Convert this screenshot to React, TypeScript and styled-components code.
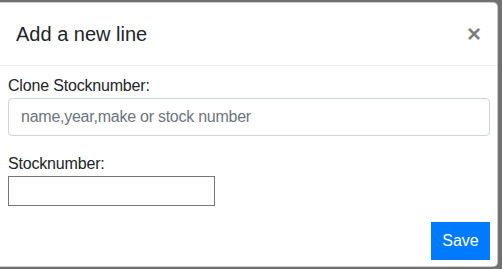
import styled, { createGlobalStyle } from "styled-components";

const GlobalStyle = createGlobalStyle`
  html, body {
    margin: 0;
    padding: 0;
    background: #fff;
  }
  body {
    font-family: "Liberation Sans", Arial, sans-serif;
    color: #212529;
  }
`;

const Backdrop = styled.div`
  position: fixed;
  inset: 0;
  background-color: #717171;
  display: flex;
  align-items: flex-start;
  padding-top: 2px;
`;

const Dialog = styled.div`
  width: 498px;
  height: 265px;
  box-sizing: border-box;
  background: #fff;
  border: 1px solid rgba(0, 0, 0, 0.2);
  border-left: none;
  border-radius: 0 5px 5px 0;
  display: flex;
  flex-direction: column;
`;

const Header = styled.div`
  display: flex;
  justify-content: space-between;
  align-items: center;
  padding: 16px;
  border-bottom: 1px solid #e9ecef;
`;

const Title = styled.h5`
  margin: 0;
  font-size: 20px;
  font-weight: 400;
  line-height: 30px;
  color: #212529;
`;

const CloseButton = styled.button`
  border: none;
  background: none;
  padding: 0;
  font-family: "Liberation Sans", Arial, sans-serif;
  font-size: 24px;
  font-weight: 700;
  line-height: 1;
  color: #000;
  opacity: 0.5;
  cursor: pointer;
`;

const Body = styled.div`
  padding: 8px 7px 6px 8px;
  display: flex;
  flex-direction: column;
  flex: 1;
`;

const Group = styled.div`
  display: flex;
  flex-direction: column;
  align-items: flex-start;
  margin-bottom: 16px;
`;

const Label = styled.label`
  font-size: 16px;
  line-height: 24px;
  letter-spacing: -0.18px;
`;

const TextInput = styled.input`
  box-sizing: border-box;
  width: 100%;
  height: 38px;
  padding: 6px 12px;
  font-family: "Liberation Sans", Arial, sans-serif;
  font-size: 16px;
  letter-spacing: -0.25px;
  color: #495057;
  border: 1px solid #ced4da;
  border-radius: 4px;
  outline: none;

  &::placeholder {
    color: #6c757d;
  }
`;

const PlainInput = styled.input`
  box-sizing: border-box;
  width: 207px;
  height: 30px;
  border: 1px solid #767676;
  border-radius: 0;
  padding: 2px 4px;
  font-size: 16px;
  outline: none;
`;

const Footer = styled.div`
  display: flex;
  justify-content: flex-end;
`;

const SaveButton = styled.button`
  width: 59px;
  height: 38px;
  border: none;
  border-radius: 0;
  background-color: #007bff;
  color: #fff;
  font-family: "Liberation Sans", Arial, sans-serif;
  font-size: 16px;
  cursor: pointer;
`;

function App() {
  return (
    <>
      <GlobalStyle />
      <Backdrop>
        <Dialog>
          <Header>
            <Title>Add a new line</Title>
            <CloseButton aria-label="Close">×</CloseButton>
          </Header>
          <Body>
            <Group>
              <Label>Clone Stocknumber:</Label>
              <TextInput placeholder="name,year,make or stock number" />
            </Group>
            <Group>
              <Label>Stocknumber:</Label>
              <PlainInput />
            </Group>
            <Footer>
              <SaveButton>Save</SaveButton>
            </Footer>
          </Body>
        </Dialog>
      </Backdrop>
    </>
  );
}

export default App;
